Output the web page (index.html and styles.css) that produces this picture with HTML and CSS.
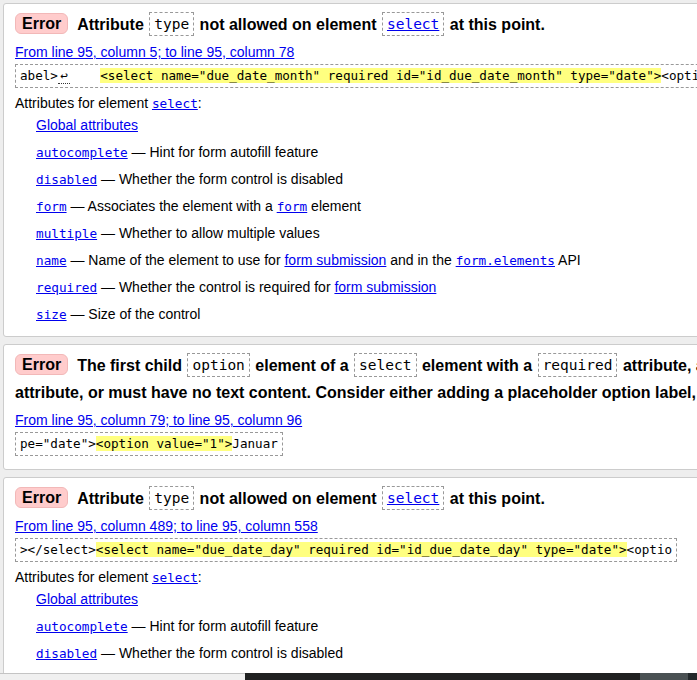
FILE: index.html
```html
<!DOCTYPE html>
<html lang="en">
<head>
<meta charset="utf-8">
<title>Validation results</title>
<link rel="stylesheet" href="styles.css">
</head>
<body>
<ol class="messages">
  <li class="card">
    <p class="title"><strong class="badge">Error</strong><span>Attribute <code class="box">type</code> not allowed on element <code class="box"><a href="#">select</a></code> at this point.</span></p>
    <p class="location"><a href="#">From line 95, column 5; to line 95, column 78</a></p>
    <p class="extract"><code>abel&gt;<abbr class="lf" title="line break">↩</abbr>    <b class="hl">&lt;select name="due_date_month" required id="id_due_date_month" type="date"&gt;</b>&lt;option value="1"&gt;January&lt;/option&gt;</code></p>
    <p class="attrs-head">Attributes for element <a class="mono" href="#">select</a>:</p>
    <dl class="attrs">
      <dd><a href="#">Global attributes</a></dd>
      <dd><a class="mono" href="#">autocomplete</a> — Hint for form autofill feature</dd>
      <dd><a class="mono" href="#">disabled</a> — Whether the form control is disabled</dd>
      <dd><a class="mono" href="#">form</a> — Associates the element with a <a class="mono" href="#">form</a> element</dd>
      <dd><a class="mono" href="#">multiple</a> — Whether to allow multiple values</dd>
      <dd><a class="mono" href="#">name</a> — Name of the element to use for <a href="#">form submission</a> and in the <a class="mono" href="#">form.elements</a> API</dd>
      <dd><a class="mono" href="#">required</a> — Whether the control is required for <a href="#">form submission</a></dd>
      <dd><a class="mono" href="#">size</a> — Size of the control</dd>
    </dl>
  </li>
  <li class="card">
    <p class="title nowrap"><strong class="badge">Error</strong><span>The first child <code class="box">option</code> element of a <code class="box">select</code> element with a <code class="box">required</code> attribute, and without a <code class="box">multiple</code> attribute, and without a <code class="box">size</code> attribute whose value is greater than <code class="box">1</code>, must have either an empty <code class="box">value</code><br>attribute, or must have no text content. Consider either adding a placeholder option label, or adding a <code class="box">size</code> attribute with a value equal to the number of <code class="box">option</code> elements.</span></p>
    <p class="location"><a href="#">From line 95, column 79; to line 95, column 96</a></p>
    <p class="extract"><code>pe="date"&gt;<b class="hl">&lt;option value="1"&gt;</b>Januar</code></p>
  </li>
  <li class="card">
    <p class="title"><strong class="badge">Error</strong><span>Attribute <code class="box">type</code> not allowed on element <code class="box"><a href="#">select</a></code> at this point.</span></p>
    <p class="location"><a href="#">From line 95, column 489; to line 95, column 558</a></p>
    <p class="extract"><code>&gt;&lt;/select&gt;<b class="hl">&lt;select name="due_date_day" required id="id_due_date_day" type="date"&gt;</b>&lt;optio</code></p>
    <p class="attrs-head">Attributes for element <a class="mono" href="#">select</a>:</p>
    <dl class="attrs">
      <dd><a href="#">Global attributes</a></dd>
      <dd><a class="mono" href="#">autocomplete</a> — Hint for form autofill feature</dd>
      <dd><a class="mono" href="#">disabled</a> — Whether the form control is disabled</dd>
      <dd><a class="mono" href="#">form</a> — Associates the element with a <a class="mono" href="#">form</a> element</dd>
      <dd><a class="mono" href="#">multiple</a> — Whether to allow multiple values</dd>
    </dl>
  </li>
</ol>
<div class="strip">
  <span class="strip-light"></span>
  <span class="strip-dark"></span>
  <span class="strip-thumb"></span>
  <span class="strip-end"></span>
</div>
</body>
</html>
```
FILE: styles.css
```css
html {
  overflow: hidden;
}
body {
  margin: 0;
  padding: 3px 0 0 3px;
  background: #eeeeee;
  font-family: "Liberation Sans", Arial, sans-serif;
  font-size: 14px;
  color: #000;
  overflow: hidden;
  width: 1600px;
}
a {
  color: #0000ee;
  text-decoration: underline;
}
.messages {
  list-style: none;
  margin: 0;
  padding: 0;
  width: 1500px;
  display: flex;
  flex-direction: column;
  gap: 7px;
}
.card {
  background: #fff;
  border: 1px solid #cccccc;
  border-radius: 3px;
  padding: 7px 11px 13px;
}
.card p {
  margin: 0;
}
.title {
  font-size: 16px;
  font-weight: bold;
  line-height: 27px;
}
.nowrap {
  white-space: nowrap;
}
.badge {
  display: inline-block;
  line-height: 17px;
  padding: 1px 6px;
  margin-right: 9px;
  background: #ffcccc;
  border: 1px solid #f2b8b8;
  border-radius: 6px;
  vertical-align: 1px;
}
.box {
  display: inline-block;
  font-family: "DejaVu Sans Mono", monospace;
  font-weight: normal;
  font-size: 14.5px;
  line-height: 22px;
  padding: 0 4px;
  margin: 0 1px;
  border: 1px dashed #999999;
  vertical-align: top;
  margin-top: 1px;
}
.location {
  margin-top: 5px !important;
  line-height: 18px;
}
.extract {
  margin-top: 3px !important;
  line-height: 22px;
}
.extract code {
  display: inline-block;
  font-family: "DejaVu Sans Mono", monospace;
  font-size: 12.6px;
  line-height: 22px;
  border: 1px dashed #999999;
  padding: 0 4px;
  white-space: pre;
  color: #000;
}
.hl {
  font-weight: normal;
  background: #ffff80;
}
.lf {
  display: inline-block;
  width: 12px;
  text-align: center;
  text-decoration: none;
  line-height: 14px;
  border-bottom: 1px dotted #333;
}
.attrs-head {
  margin-top: 6px !important;
  line-height: 18px;
}
.mono {
  font-family: "DejaVu Sans Mono", monospace;
  font-size: 12.7px;
  line-height: 1;
}
.attrs {
  margin: 4px 0 0;
  padding: 0;
  display: flex;
  flex-direction: column;
  gap: 9px;
}
.attrs dd {
  margin: 0 0 0 21px;
  line-height: 18px;
  height: 18px;
}
.strip {
  position: fixed;
  left: 0;
  right: 0;
  bottom: 0;
  height: 7px;
  display: flex;
}
.strip-light {
  width: 245px;
  background: #f0f0f0;
  border-top: 1px solid #c4c4c4;
}
.strip-dark {
  flex: 1;
  background: #202121;
}
.strip-thumb {
  width: 48px;
  background: #4a5153;
}
.strip-end {
  width: 9px;
  background: #23292b;
}
```
